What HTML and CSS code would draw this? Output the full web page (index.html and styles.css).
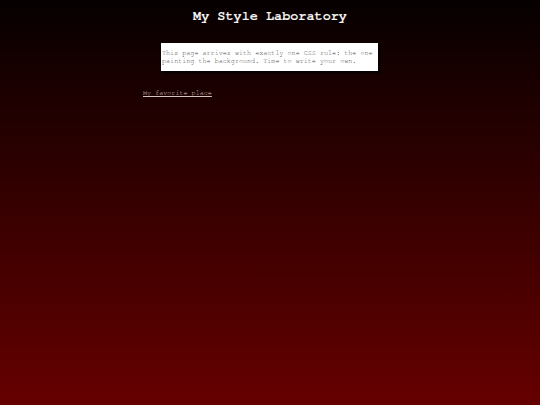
FILE: index.html
```html
<!DOCTYPE html>
<html>
<head>
<meta charset="utf-8">
<title>My Style Laboratory</title>
<link rel="stylesheet" href="styles.css">
</head>
<body>
<h1 class="title">My Style Laboratory</h1>
<main class="content">
  <p class="note">This page arrives with exactly one CSS rule: the one painting the background. Time to write your own.</p>
  <p class="links"><a class="fav" href="#">My favorite place</a></p>
</main>
</body>
</html>
```
FILE: styles.css
```css
html, body {
  margin: 0;
  padding: 0;
}
body {
  min-height: 100vh;
  background: linear-gradient(to bottom, #060000 0%, #660000 100%);
  font-family: "Nimbus Mono PS", "Nimbus Mono L", FreeMono, "Liberation Mono", monospace;
}
.title {
  margin: 0;
  padding-top: 8px;
  text-align: center;
  font-size: 13.5px;
  line-height: 17px;
  font-weight: bold;
  color: #f2f2f2;
}
.content {
  width: 254px;
  margin: 0 auto;
  padding-top: 18px;
}
.note {
  width: 215px;
  margin: 0 0 0 18px;
  padding: 6px 1px 6px 1px;
  background: #fff;
  color: #4a4a4a;
  font-size: 6.75px;
  line-height: 8px;
  box-shadow: 2px 2px 2px rgba(0,0,0,0.9);
}
.links {
  margin: 18px 0 0 0;
  font-size: 6.75px;
  line-height: 8px;
}
.fav {
  color: #d4c4c4;
  text-decoration: underline;
}
```
